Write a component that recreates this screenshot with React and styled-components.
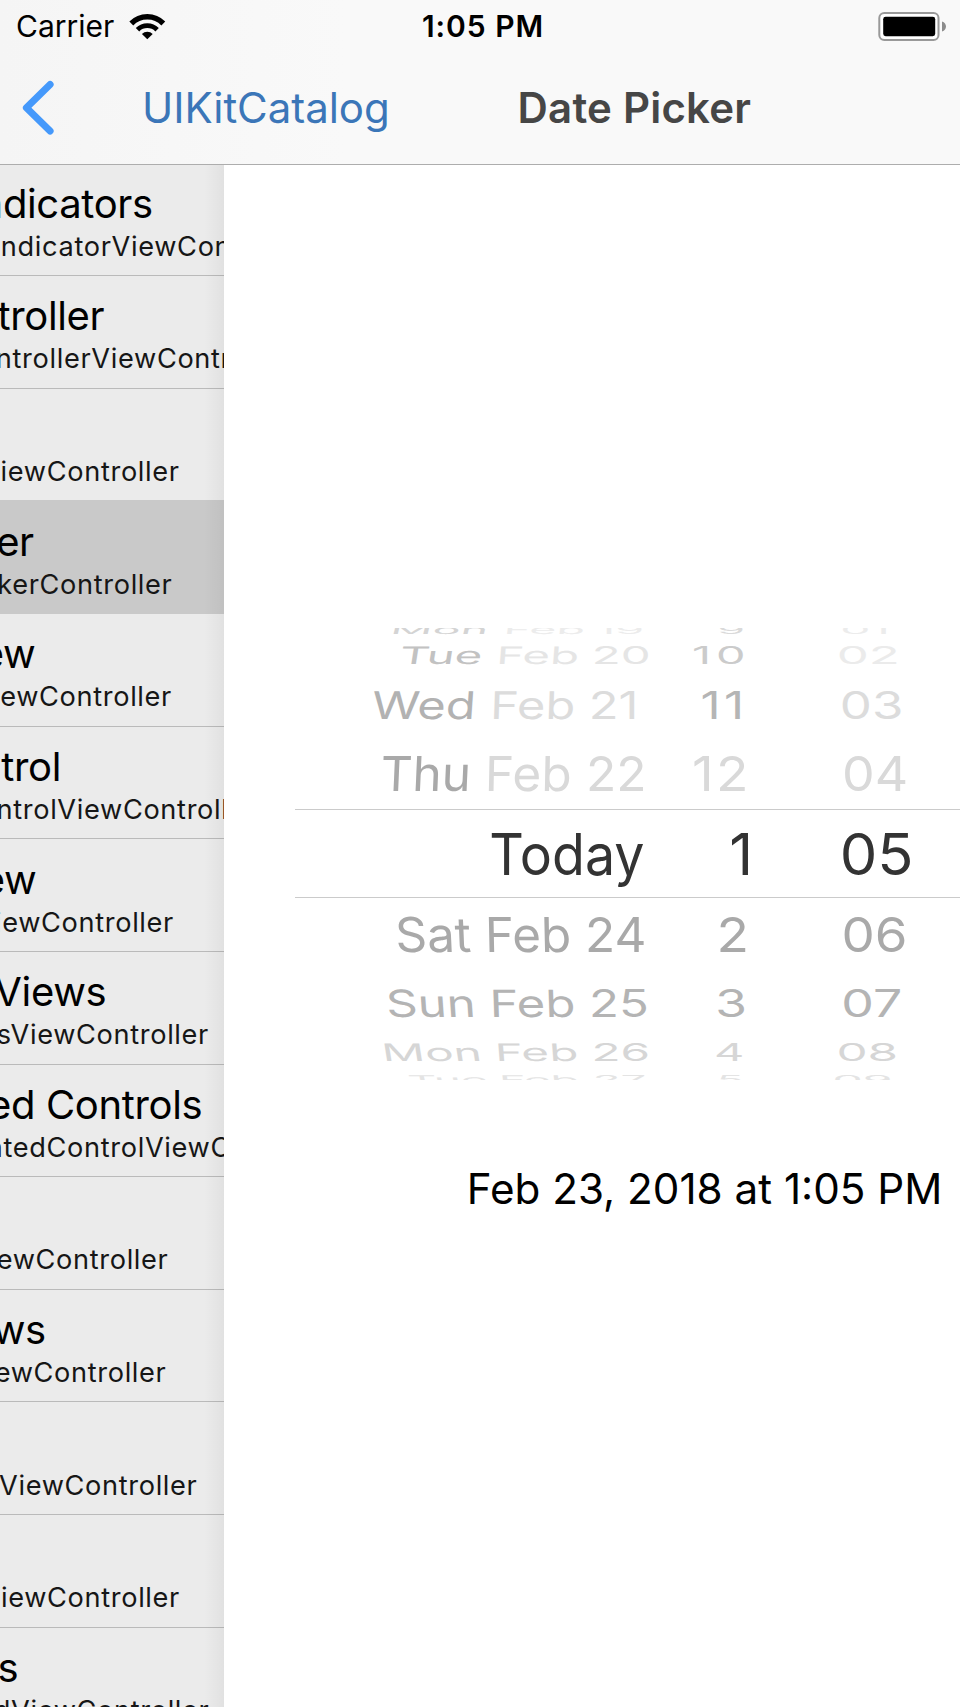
import React from "react";
import styled, { createGlobalStyle } from "styled-components";

const GlobalStyle = createGlobalStyle`
  * { box-sizing: border-box; }
  body {
    margin: 0;
    background: #fff;
    font-family: Inter, "Liberation Sans", sans-serif;
    color: #000;
  }
`;

const Screen = styled.div`
  width: 960px;
  height: 1707px;
  display: flex;
  flex-direction: column;
  overflow: hidden;
  background: #fff;
`;

const Header = styled.header`
  height: 165px;
  flex: none;
  display: flex;
  flex-direction: column;
  background: linear-gradient(90deg, #f5f5f5, #f9f9f9 36%);
  border-bottom: 1px solid #adadad;
`;

const StatusBar = styled.div`
  height: 53px;
  display: grid;
  grid-template-columns: 1fr auto 1fr;
  align-items: center;
  padding: 0 13px 0 16px;
  font-size: 30px;
  line-height: 53px;
`;

const Carrier = styled.div`
  display: flex;
  align-items: center;
  gap: 14.5px;
`;

const Clock = styled.div`
  font-weight: 600;
  letter-spacing: 0.95px;
  padding-left: 3px;
`;

const Battery = styled.svg`
  justify-self: end;
`;

const NavBar = styled.nav`
  height: 109px;
  display: flex;
  align-items: center;
  padding-left: 20px;
  font-size: 42px;
  line-height: 60px;
`;

const BackLabel = styled.div`
  width: 376px;
  padding-left: 86px;
  color: #3b76b8;
  letter-spacing: -0.05px;
`;

const NavTitle = styled.h1`
  margin: 0;
  padding-left: 85.5px;
  font-size: 42px;
  font-weight: 600;
  line-height: 60px;
  letter-spacing: 0.22px;
  color: #464646;
`;

const Body = styled.main`
  flex: 1;
  min-height: 0;
  display: flex;
`;

const Sidebar = styled.aside`
  width: 224px;
  flex: none;
  position: relative;
  overflow: hidden;
  background: #ebebeb;
  &::after {
    content: "";
    position: absolute;
    inset: 0 0 0 auto;
    width: 20px;
    background: linear-gradient(90deg, rgba(0, 0, 0, 0), rgba(0, 0, 0, 0.045));
  }
`;

const List = styled.ul`
  list-style: none;
  margin: -1.5px 0 0;
  padding: 0;
`;

const Item = styled.li`
  height: 112.64px;
  padding-top: 15.3px;
  display: flex;
  flex-direction: column;
  align-items: flex-end;
  white-space: nowrap;
  background: ${(p) => (p.$selected ? "#c9c9c9" : "transparent")};
  border-bottom: 1px solid ${(p) => (p.$plainEdge ? "#c9c9c9" : "#bababa")};
`;

const ItemTitle = styled.div`
  height: 50px;
  font-size: 40px;
  line-height: 50px;
  letter-spacing: -0.35px;
  margin-right: ${(p) => 223.2 - p.$end}px;
`;

const ItemDetail = styled.div`
  font-size: 27.2px;
  line-height: 36.8px;
  letter-spacing: 0.65px;
  color: #161616;
  margin-right: ${(p) => 223 - p.$end}px;
`;

const Detail = styled.section`
  flex: 1;
  min-width: 0;
  display: flex;
  flex-direction: column;
  padding-top: 463px;
`;

const Wheel = styled.div`
  height: 451.5px;
  flex: none;
  margin-left: 71px;
  overflow: hidden;
  display: flex;
  flex-direction: column;
`;

const WheelRow = styled.div`
  height: ${(p) => p.$height}px;
  flex: none;
  display: grid;
  grid-template-columns: 353px 100px 160px;
  align-items: ${(p) => p.$edge || "center"};
  font-size: ${(p) => p.$size}px;
  line-height: ${(p) => (p.$edge ? 1 : 20)}px;
  color: ${(p) => p.$color};
  ${(p) => p.$current && "border-top: 1px solid #cbcbcb; border-bottom: 1px solid #cbcbcb;"}
`;

const Cell = styled.div`
  justify-self: end;
  white-space: pre;
  letter-spacing: ${(p) => p.$gap || 0}px;
  transform-origin: right center;
  transform: translate(${(p) => p.$shift}px, 0.8px) scaleX(${(p) => p.$stretch});
  color: ${(p) => p.$color || "inherit"};
`;

const Word = styled.span`
  display: inline-block;
  white-space: pre;
  transform: skewX(${(p) => p.$lean}deg);
  color: ${(p) => p.$color || "inherit"};
`;

const DateLabel = styled.div`
  margin-top: 79px;
  padding-right: 17.6px;
  text-align: right;
  font-size: 42.2px;
  line-height: 60px;
`;

const items = [
  { title: "ndicators", te: 152, detail: "ndicatorViewCon", de: 230.3 },
  { title: "troller", te: 103.5, detail: "ntrollerViewContr", de: 230.5 },
  { detail: "iewController", de: 178.7, beforeSelected: true },
  { title: "er", te: 33, detail: "kerController", de: 171.5, selected: true },
  { title: "ew", te: 34.5, detail: "ewController", de: 171 },
  { title: "trol", te: 60.3, detail: "ntrolViewControll", de: 227.5 },
  { title: "ew", te: 35.5, detail: "iewController", de: 173 },
  { title: "Views", te: 105.5, detail: "sViewController", de: 208 },
  { title: "ed Controls", te: 201.5, detail: "atedControlViewC", de: 230 },
  { detail: "ewController", de: 167.5 },
  { title: "ws", te: 45, detail: "ewController", de: 165.5 },
  { detail: "ViewController", de: 196.5 },
  { detail: "ViewController", de: 179 },
  { title: "s", te: 17.5, detail: "dViewController", de: 208.5 },
];

// Each cell: text, horizontal stretch, horizontal shift, letter gap, colour.
const wheel = [
  { height: 10.3, size: 12, edge: "start", color: "#ececec", lean: -14, dayColor: "#d4d4d4",
    date: ["Mon", "Feb", "19", 3.89, -4], hour: ["9", 3.7, -3.5, 0, "#dadada"], minute: ["01", 4, -18.4] },
  { height: 32.8, size: 24, color: "#e5e5e5", lean: -9, dayColor: "#c2c2c2",
    date: ["Tue", "Feb", "20", 1.975, 2.5], hour: ["10", 1.95, 2.5, 2.5, "#cbcbcb"], minute: ["02", 2.12, -8, 0, "#ebebeb"] },
  { height: 65.8, size: 38, color: "#dcdcdc", lean: -4, dayColor: "#b2b2b2",
    date: ["Wed", "Feb", "21", 1.285, -10], hour: ["11", 1.3, -0.6, 2.7, "#b5b5b5"], minute: ["03", 1.34, -5.1] },
  { height: 72.6, size: 48, color: "#d9d9d9", lean: -2.5, dayColor: "#a9a9a9",
    date: ["Thu", "Feb", "22", 1.035, -1.6], hour: ["12", 1.11, 2.8, 2], minute: ["04", 1.08, 0] },
  { height: 89, size: 57, color: "#333", current: true,
    date: ["Today", 0.942, -3.2], hour: ["1", 1.03, 5], minute: ["05", 1.046, 5.9] },
  { height: 71.6, size: 48, color: "#a9a9a9", lean: 2.5,
    date: ["Sat", "Feb", "24", 1.03, -1.4], hour: ["2", 1.11, 0.8], minute: ["06", 1.1, -0.6] },
  { height: 66.6, size: 37.5, color: "#b4b4b4", lean: 4,
    date: ["Sun", "Feb", "25", 1.31, 1.2], hour: ["3", 1.37, -1.3], minute: ["07", 1.38, -5.9] },
  { height: 31.4, size: 24, color: "#d6d6d6", lean: 9,
    date: ["Mon", "Feb", "26", 1.985, 2], hour: ["4", 1.96, -3], minute: ["08", 2.06, -9.8] },
  { height: 11.4, size: 12, edge: "end", color: "#e4e4e4", lean: 14,
    date: ["Tue", "Feb", "27", 3.8, -1.5], hour: ["5", 3.6, -5], minute: ["09", 4, -15.4] },
];

function WifiIcon() {
  return (
    <svg width="37" height="27" viewBox="129 12 37 27" fill="none" stroke="#000">
      <path d="M131.3 22.5 A22.3 22.3 0 0 1 163.3 22.5" strokeWidth="5.4" />
      <path d="M137.5 28.7 A13.9 13.9 0 0 1 157.1 28.7" strokeWidth="4.9" />
      <path d="M147.3 38.3 L141.9 33 A7.6 7.6 0 0 1 152.7 33 Z" fill="#000" stroke="none" />
    </svg>
  );
}

function BatteryIcon() {
  return (
    <Battery width="70" height="31" viewBox="0 0 70 31">
      <rect x="2.3" y="2" width="59.2" height="27" rx="5" fill="#fff" stroke="#999" strokeWidth="2" />
      <rect x="6.2" y="5.8" width="52" height="19.4" rx="2.4" fill="#000" />
      <path d="M65 10.5 C70.3 12 70.3 19 65 20.5 Z" fill="#8c8c8c" />
    </Battery>
  );
}

function Chevron() {
  return (
    <svg width="36" height="58" viewBox="0 0 36 58" fill="none">
      <path d="M30.1 5.5 L6.4 28.7 L30.1 52" stroke="#4599fb" strokeWidth="7" strokeLinecap="round" strokeLinejoin="round" />
    </svg>
  );
}

function ValueCell({ value: [text, stretch, shift, gap, color] }) {
  return (
    <Cell $stretch={stretch} $shift={shift} $gap={gap} $color={color}>{text}</Cell>
  );
}

function DateCell({ row }) {
  if (row.current) return <ValueCell value={row.date} />;
  const [weekday, month, day, stretch, shift] = row.date;
  return (
    <Cell $stretch={stretch} $shift={shift}>
      <Word $lean={row.lean / stretch} $color={row.dayColor}>{weekday}</Word>
      {" "}
      <Word $lean={row.lean / 2 / stretch}>{month}</Word>
      {" "}
      <Word $lean={0}>{day}</Word>
    </Cell>
  );
}

export default function App() {
  return (
    <Screen>
      <GlobalStyle />
      <Header>
        <StatusBar>
          <Carrier>
            <span>Carrier</span>
            <WifiIcon />
          </Carrier>
          <Clock>1:05 PM</Clock>
          <BatteryIcon />
        </StatusBar>
        <NavBar>
          <Chevron />
          <BackLabel>UIKitCatalog</BackLabel>
          <NavTitle>Date Picker</NavTitle>
        </NavBar>
      </Header>
      <Body>
        <Sidebar>
          <List>
            {items.map((item, i) => (
              <Item key={i} $selected={item.selected} $plainEdge={item.selected || item.beforeSelected}>
                <ItemTitle $end={item.te || 0}>{item.title}</ItemTitle>
                <ItemDetail $end={item.de}>{item.detail}</ItemDetail>
              </Item>
            ))}
          </List>
        </Sidebar>
        <Detail>
          <Wheel>
            {wheel.map((row, i) => (
              <WheelRow key={i} $height={row.height} $size={row.size} $color={row.color} $edge={row.edge} $current={row.current}>
                <DateCell row={row} />
                <ValueCell value={row.hour} />
                <ValueCell value={row.minute} />
              </WheelRow>
            ))}
          </Wheel>
          <DateLabel>Feb 23, 2018 at 1:05 PM</DateLabel>
        </Detail>
      </Body>
    </Screen>
  );
}
